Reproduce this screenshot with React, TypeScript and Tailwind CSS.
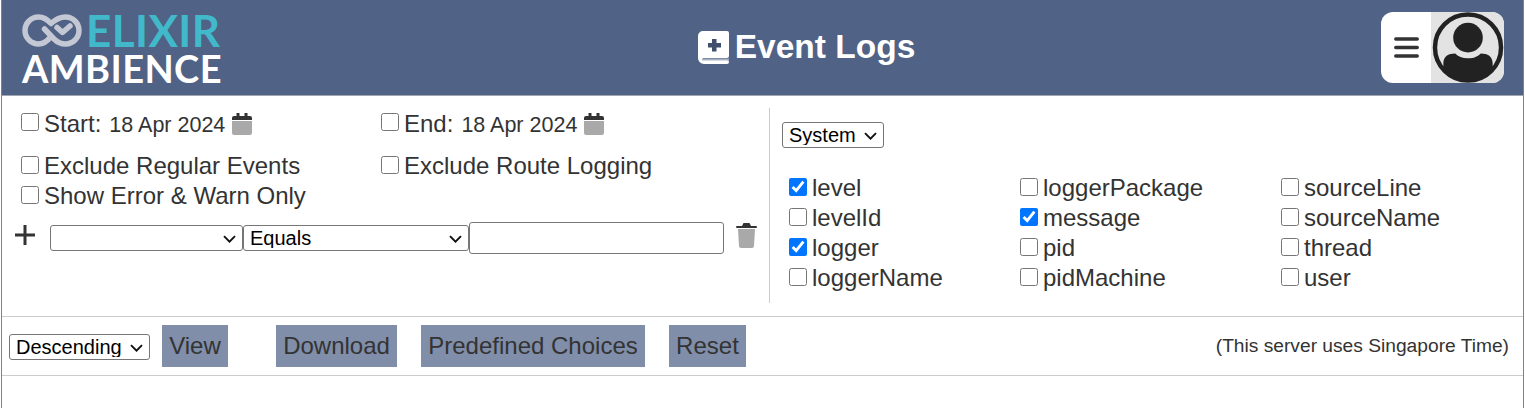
const font = { fontFamily: '"Liberation Sans", Arial, sans-serif' };

const fields = [
  [
    { name: 'level', on: true },
    { name: 'levelId', on: false },
    { name: 'logger', on: true },
    { name: 'loggerName', on: false },
  ],
  [
    { name: 'loggerPackage', on: false },
    { name: 'message', on: true },
    { name: 'pid', on: false },
    { name: 'pidMachine', on: false },
  ],
  [
    { name: 'sourceLine', on: false },
    { name: 'sourceName', on: false },
    { name: 'thread', on: false },
    { name: 'user', on: false },
  ],
];

function Calendar() {
  return (
    <svg viewBox="0 0 20 22" className="w-5 h-[22px] shrink-0">
      <path d="M0 8h20v12a2 2 0 0 1-2 2H2a2 2 0 0 1-2-2z" fill="#a9a9a9" />
      <path d="M2 3h2.500V0h3v3h5V0h3v3H18a2 2 0 0 1 2 2v2H0V5a2 2 0 0 1 2-2z" fill="#333" />
    </svg>
  );
}

function Trash() {
  return (
    <svg viewBox="0 0 21 25" className="w-[21px] h-[25px] shrink-0">
      <path d="M7 1a1 1 0 0 1 1-1h5a1 1 0 0 1 1 1l1 2h5a1 1 0 0 1 0 2H1a1 1 0 0 1 0-2h5z" fill="#333" />
      <path d="M2 6h17l-1 17a2 2 0 0 1-2 2H5a2 2 0 0 1-2-2z" fill="#a9a9a9" />
    </svg>
  );
}

function Check({ label, on = false }: { label: string; on?: boolean }) {
  return (
    <label className="flex items-center h-[30px] pt-[1px] text-[24px] text-[#333]">
      <input type="checkbox" defaultChecked={on} className="w-[18px] h-[18px] m-0 mr-[5px] -mt-[2px] shrink-0" />
      {label}
    </label>
  );
}

function Button({ label, className }: { label: string; className: string }) {
  return (
    <button className={`h-[42px] bg-[#808ea9] text-[#333] text-[24px] px-[7.2px] ${className}`}>{label}</button>
  );
}

function Select({ label, className }: { label?: string; className: string }) {
  return (
    <div className={`relative h-[26px] shrink-0 ${className}`}>
      <select className="w-full h-full border border-[#767676] rounded-[3px] pl-[6px] text-[20px] leading-none text-black bg-white appearance-none">
        {label && <option>{label}</option>}
      </select>
      <svg viewBox="0 0 13 8" className="absolute right-[7px] top-[10px] w-[13px] h-[8px] pointer-events-none">
        <path d="M1 1.200l5.500 5.500 5.500-5.500" fill="none" stroke="#111" strokeWidth="1.900" />
      </svg>
    </div>
  );
}

export default function App() {
  return (
    <div style={font} className="w-[1525px] h-[408px] bg-white pl-px overflow-hidden">
      <div className="w-[1523px] h-[408px] border-x border-[#7d8290]">
        <header className="h-[95px] bg-[#506285] flex items-center justify-between pl-[20px] pr-[19px]">
          <div className="w-[200px] font-bold" style={{ fontFamily: 'Lato, sans-serif' }}>
            <div className="flex items-center h-[36px] mt-[2px]">
              <svg viewBox="22 13 60 34" className="w-[60px] h-[34px] shrink-0" fill="none" stroke="#c3c8d4" strokeWidth="5.500" strokeLinecap="round" strokeLinejoin="round">
                <path d="M50.500 37C47 41.500 44 44 38.500 44a13.500 13.500 0 0 1 0-27C44 17 47 19 51 23.500C56 19 60 17 65.500 17a13.500 13.500 0 0 1 0 27C60 44 57 42 54 39L44.500 29" />
                <path d="M57 27.500l5.500 5 7.500-6.500" />
              </svg>
              <span className="text-[44px] leading-[36px] text-[#42b9ca] ml-[4px] tracking-[0.4px]">ELIXIR</span>
            </div>
            <div className="text-[38px] leading-[36px] text-white tracking-[0.4px] h-[36px] mt-[2px]">AMBIENCE</div>
          </div>
          <div className="flex items-center gap-[6px] font-bold text-[33.500px] text-white ml-[10px] -mt-[1px]">
            <svg viewBox="0 0 31 33" className="w-[31px] h-[33px]">
              <path d="M5 0h24a2 2 0 0 1 2 2v23a2 2 0 0 1-2 2H5a3 3 0 0 0 0 2h24a2 2 0 0 1 0 4H6a6 6 0 0 1-6-6V5a5 5 0 0 1 5-5z" fill="#fff" />
              <path d="M4 27.500h27v2H4z" fill="#a9b2c4" />
              <path d="M14 8h4.500v4H23v4.500h-4.500v4H14v-4h-4V12h4z" fill="#414f6e" />
            </svg>
            Event Logs
          </div>
          <div className="w-[123px] h-[71px] rounded-[12px] overflow-hidden bg-white flex">
            <div className="w-[50px] flex items-center justify-center">
              <svg viewBox="0 0 25 21" className="w-[25px] h-[21px]">
                <path d="M1.800 2h21.400M1.800 10.500h21.400M1.800 19h21.400" stroke="#333" strokeWidth="3.500" strokeLinecap="round" />
              </svg>
            </div>
            <div className="flex-1 bg-[#e3e3e3] flex items-center justify-center">
              <svg viewBox="0 0 72 72" className="w-[72px] h-[71px]">
                <circle cx="36" cy="36" r="33.500" fill="none" stroke="#222" strokeWidth="4.500" />
                <circle cx="36" cy="26" r="15" fill="#222" />
                <path d="M11 60V52c0-7 5-10 12-10 3 3 7 5 13 5s10-2 13-5c7 0 12 3 12 10v8a35 35 0 0 1-50 0z" fill="#222" />
              </svg>
            </div>
          </div>
        </header>

        <section className="h-[222px] flex border-t border-t-[#a3a7b0] border-b border-b-[#cccccc] pt-[12px]">
          <div className="w-[768px] h-[195px] border-r border-[#cccccc]">
            <div className="grid grid-cols-[360px_1fr] pl-[19px]">
              <div className="flex items-center h-[30px] pt-[1px] text-[#333]">
                <label className="flex items-center text-[24px]">
                  <input type="checkbox" className="w-[18px] h-[18px] m-0 mr-[5px] -mt-[4px]" />
                  Start:
                </label>
                <span className="text-[21.500px] ml-2 mr-[7px] mt-[3px]">18 Apr 2024</span>
                <Calendar />
              </div>
              <div className="flex items-center h-[30px] pt-[1px] text-[#333]">
                <label className="flex items-center text-[24px]">
                  <input type="checkbox" className="w-[18px] h-[18px] m-0 mr-[5px] -mt-[4px]" />
                  End:
                </label>
                <span className="text-[21.500px] ml-2 mr-[7px] mt-[3px]">18 Apr 2024</span>
                <Calendar />
              </div>
            </div>
            <div className="grid grid-cols-[360px_1fr] pl-[19px] mt-[12px]">
              <Check label="Exclude Regular Events" />
              <Check label="Exclude Route Logging" />
              <Check label="Show Error & Warn Only" />
            </div>
            <div className="flex items-center pl-[13px] mt-[12px] h-[32px]">
              <span className="w-[20px] h-[20px] mr-[15px] -mt-[6px]">
                <svg viewBox="0 0 20 20" className="w-5 h-5"><path d="M10 0v20M0 10h20" stroke="#333" strokeWidth="3" /></svg>
              </span>
              <Select className="w-[193px]" />
              <Select label="Equals" className="w-[226px]" />
              <input type="text" className="w-[255px] h-[32px] border border-[#767676] rounded-[3px]" />
              <span className="ml-[12px] -mt-[5px]"><Trash /></span>
            </div>
          </div>
          <div className="flex-1 pl-[12px] text-[#333]">
            <Select label="System" className="mt-[14px] w-[102px]" />
            <div className="flex mt-[24px] pl-[7px]">
              <div className="w-[231px]">{fields[0].map((f) => <Check key={f.name} label={f.name} on={f.on} />)}</div>
              <div className="w-[261px]">{fields[1].map((f) => <Check key={f.name} label={f.name} on={f.on} />)}</div>
              <div>{fields[2].map((f) => <Check key={f.name} label={f.name} on={f.on} />)}</div>
            </div>
          </div>
        </section>

        <section className="h-[59px] flex items-center border-b border-[#cccccc] pl-[7px] pr-[14px]">
          <Select label="Descending" className="w-[141px] mt-[2px]" />
          <Button label="View" className="ml-[12px]" />
          <Button label="Download" className="ml-[48px]" />
          <Button label="Predefined Choices" className="ml-[24px]" />
          <Button label="Reset" className="ml-[24px]" />
          <span className="ml-auto text-[19.200px] text-[#333]">(This server uses Singapore Time)</span>
        </section>
      </div>
    </div>
  );
}
